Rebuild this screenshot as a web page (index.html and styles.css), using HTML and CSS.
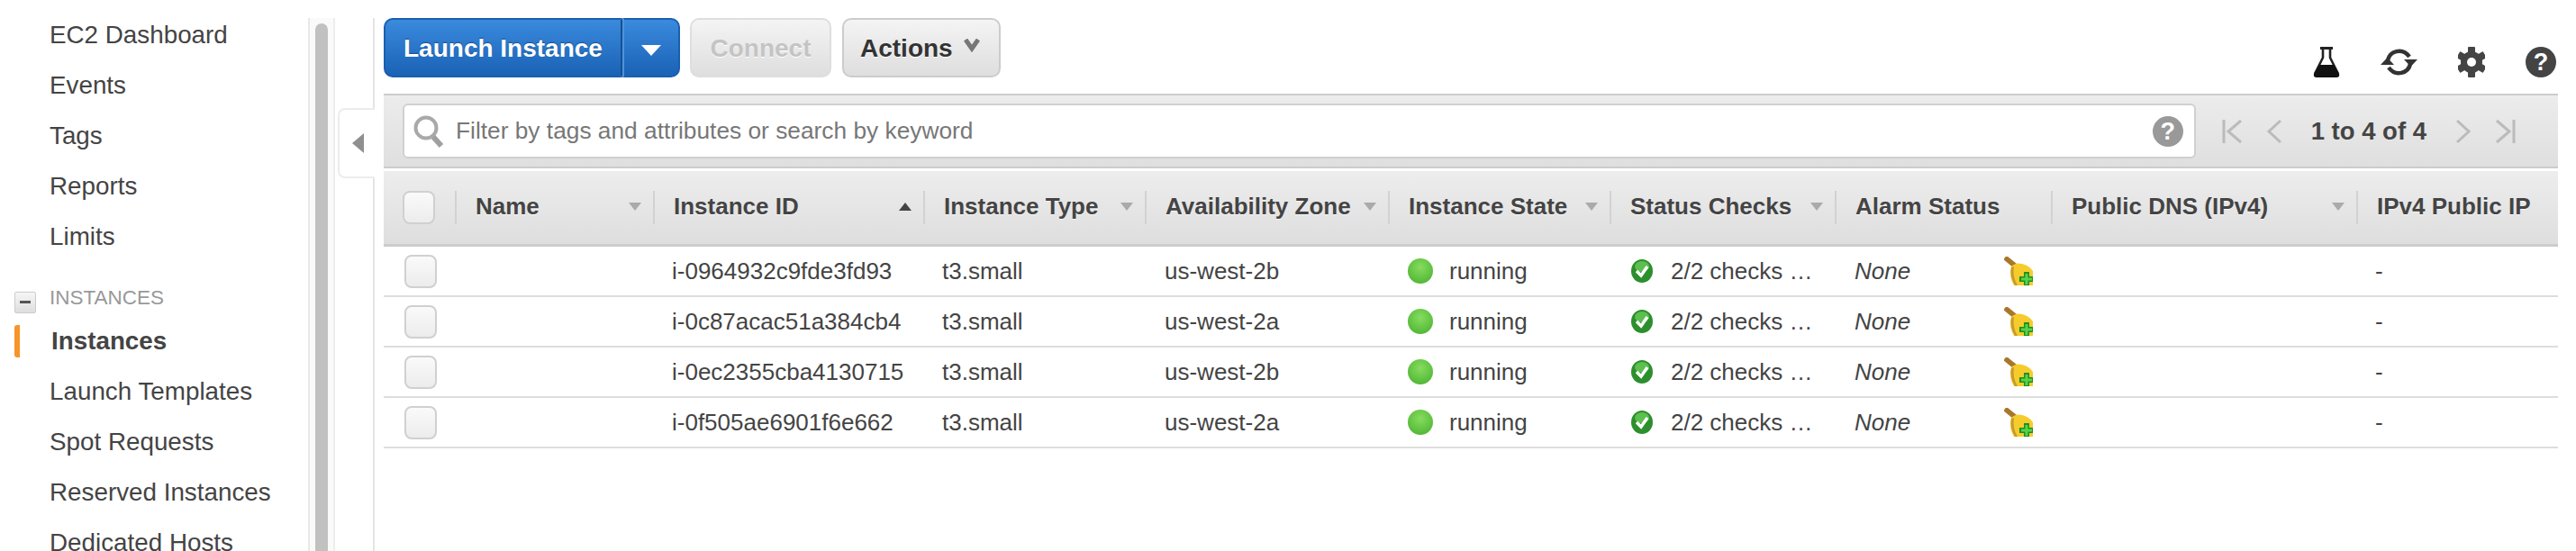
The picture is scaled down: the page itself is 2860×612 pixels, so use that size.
FILE: index.html
```html
<!DOCTYPE html>
<html lang="en">
<head>
  <meta charset="UTF-8">
  <title>EC2 Instances</title>
  <link rel="stylesheet" href="styles.css">
</head>
<body>
  <aside class="sidebar">
    <ul class="nav">
      <li>EC2 Dashboard</li>
      <li>Events</li>
      <li>Tags</li>
      <li>Reports</li>
      <li>Limits</li>
      <li class="nav-group"><span class="minus-box"><span></span></span>INSTANCES</li>
      <li class="active">Instances</li>
      <li>Launch Templates</li>
      <li>Spot Requests</li>
      <li>Reserved Instances</li>
      <li>Dedicated Hosts</li>
    </ul>
  </aside>
  <div class="scrollbar"><div class="thumb"></div></div>
  <div class="rail">
    <div class="rail-top"></div>
    <div class="collapse-tab"><span class="arrow-left"></span></div>
    <div class="rail-bottom"></div>
  </div>

  <main class="main">
    <div class="toolbar">
      <div class="split-btn">
        <button class="btn-blue btn-label">Launch Instance</button>
        <button class="btn-blue btn-caret"><span class="caret-white"></span></button>
      </div>
      <button class="btn btn-disabled">Connect</button>
      <button class="btn btn-actions">Actions
        <svg class="chevron" width="18" height="15" viewBox="0 0 18 15"><path d="M2 1l7 10 7-10" fill="none" stroke="#777" stroke-width="5"/></svg>
      </button>
      <div class="top-icons">
        <svg width="30" height="34" viewBox="0 0 30 34">
          <path d="M8 0h14v3H8z" fill="#222"/>
          <path d="M11 2v10L2 30M19 2v10l9 18" fill="none" stroke="#222" stroke-width="2.6"/>
          <path d="M7 20h16l6 10q1 4-3 4H4q-4 0-3-4z" fill="#111"/>
        </svg>
        <svg width="41" height="34" viewBox="0 0 41 34">
          <path d="M8 15C10 5 24 0 32 11" fill="none" stroke="#333" stroke-width="4.500"/>
          <path d="M26 14h15l-7.500 8z" fill="#333"/>
          <path d="M33 19C31 29 17 34 9 23" fill="none" stroke="#333" stroke-width="4.500"/>
          <path d="M0 20h15l-7.500-8z" fill="#333"/>
        </svg>
        <svg width="30" height="34" viewBox="0 0 30 34">
          <g fill="#444">
            <rect x="11" y="0" width="8" height="34" rx="1"/>
            <rect x="11" y="0" width="8" height="34" rx="1" transform="rotate(60 15 17)"/>
            <rect x="11" y="0" width="8" height="34" rx="1" transform="rotate(120 15 17)"/>
            <circle cx="15" cy="17" r="12"/>
          </g>
          <circle cx="15" cy="17" r="5" fill="#fff"/>
        </svg>
        <span class="help-icon">?</span>
      </div>
    </div>

    <div class="filter-band">
      <div class="search-box">
        <svg width="36" height="38" viewBox="0 0 36 38">
          <circle cx="15" cy="15" r="11.500" fill="none" stroke="#a9a9a9" stroke-width="4"/>
          <path d="M23 25l9 10" stroke="#a0a0a0" stroke-width="6"/>
        </svg>
        <span class="search-text">Filter by tags and attributes or search by keyword</span>
        <span class="help-icon help-grey">?</span>
      </div>
      <div class="pager">
        <svg width="22" height="28" viewBox="0 0 22 28"><path d="M2 1v26M21 2L7 14l14 12" fill="none" stroke="#bbb" stroke-width="3"/></svg>
        <svg width="16" height="28" viewBox="0 0 16 28"><path d="M15 2L2 14l13 12" fill="none" stroke="#bbb" stroke-width="3"/></svg>
        <span class="pager-text">1 to 4 of 4</span>
        <svg width="16" height="28" viewBox="0 0 16 28"><path d="M1 2l13 12L1 26" fill="none" stroke="#bbb" stroke-width="3"/></svg>
        <svg width="22" height="28" viewBox="0 0 22 28"><path d="M20 1v26M1 2l14 12L1 26" fill="none" stroke="#bbb" stroke-width="3"/></svg>
      </div>
    </div>

    <table class="grid">
      <colgroup>
        <col class="c-check"><col class="c-name"><col class="c-id"><col class="c-type"><col class="c-zone">
        <col class="c-state"><col class="c-status"><col class="c-alarm"><col class="c-dns"><col class="c-ip">
      </colgroup>
      <thead>
        <tr>
          <th class="th-check"><span class="checkbox"></span></th>
          <th><div class="th-in">Name<span class="sort"></span></div></th>
          <th><div class="th-in">Instance ID<span class="sort sort-up"></span></div></th>
          <th><div class="th-in">Instance Type<span class="sort"></span></div></th>
          <th><div class="th-in">Availability Zone<span class="sort"></span></div></th>
          <th><div class="th-in">Instance State<span class="sort"></span></div></th>
          <th><div class="th-in">Status Checks<span class="sort"></span></div></th>
          <th><div class="th-in">Alarm Status</div></th>
          <th><div class="th-in">Public DNS (IPv4)<span class="sort"></span></div></th>
          <th><div class="th-in">IPv4 Public IP</div></th>
        </tr>
      </thead>
      <tbody id="rows"></tbody>
    </table>
  </main>

  <template id="rowTpl">
    <tr>
      <td class="td-check"><span class="checkbox"></span></td>
      <td></td>
      <td class="id"></td>
      <td>t3.small</td>
      <td class="zone"></td>
      <td class="state"><div class="cell-flex"><span class="dot"></span>running</div></td>
      <td class="checks"><div class="cell-flex status">
        <svg width="24" height="26" viewBox="0 0 24 26">
          <ellipse cx="12" cy="13" rx="12" ry="13" fill="#2c8f2c"/>
          <ellipse cx="12" cy="8" rx="8" ry="6" fill="#5cbf4f"/>
          <path d="M6 13l5 5 7-10" fill="none" stroke="#fff" stroke-width="3.500"/>
        </svg>2/2 checks …</div></td>
      <td class="alarm-cell"><div class="cell-flex alarm"><em>None</em>
        <svg class="broom" width="32" height="32" viewBox="0 0 32 32">
          <path d="M1 1l11 9" stroke="#a9772a" stroke-width="5.500"/>
          <path d="M8 11q5-5 12-3 8 2 12 8v16H11Q5 22 8 11z" fill="#f6cc2c"/>
          <path d="M8 12q-2 9 4 20h3Q9 22 11 11z" fill="#c99a2e"/>
          <path d="M28 17h-6v5h-5v6h5v4h6v-4h4v-6h-4z" fill="#1f8f1f"/>
          <path d="M26.500 19h-3v4.500H19v3h4.500V31h3v-4.500H31v-3h-4.500z" fill="#58d24a"/>
        </svg></div></td>
      <td></td>
      <td class="ip">-</td>
    </tr>
  </template>

  <script>
    const instances = [
      ['i-0964932c9fde3fd93', 'us-west-2b'],
      ['i-0c87acac51a384cb4', 'us-west-2a'],
      ['i-0ec2355cba4130715', 'us-west-2b'],
      ['i-0f505ae6901f6e662', 'us-west-2a']
    ];
    const rows = document.getElementById('rows');
    const tpl = document.getElementById('rowTpl');
    instances.forEach(([id, zone]) => {
      const row = tpl.content.cloneNode(true);
      row.querySelector('.id').textContent = id;
      row.querySelector('.zone').textContent = zone;
      rows.appendChild(row);
    });
  </script>
</body>
</html>
```

FILE: styles.css
```css
html, body {
  margin: 0;
  padding: 0;
  height: 612px;
  overflow: hidden;
  background: #fff;
}
body {
  display: flex;
  font-family: "Liberation Sans", Arial, sans-serif;
  color: #444;
}

/* left nav */
.sidebar {
  width: 342px;
  flex: none;
  padding-top: 11px;
  box-sizing: border-box;
}
.nav {
  list-style: none;
  margin: 0;
  padding: 0;
  font-size: 27.8px;
}
.nav li {
  height: 56px;
  line-height: 56px;
  padding-left: 55px;
  white-space: nowrap;
}
.nav .nav-group {
  display: flex;
  align-items: center;
  height: 42px;
  line-height: 42px;
  margin-top: 18px;
  padding: 1px 0 0 16px;
  box-sizing: border-box;
  font-size: 22.5px;
  color: #999;
}
.minus-box {
  display: flex;
  align-items: center;
  justify-content: center;
  width: 24px;
  height: 24px;
  margin: 10px 15px 0 0;
  box-sizing: border-box;
  background: linear-gradient(#f6f6f6, #dedede);
  border: 1px solid #ccc;
  border-radius: 2px;
}
.minus-box span {
  width: 12px;
  height: 3px;
  background: #555;
}
.nav .active {
  display: flex;
  align-items: center;
  padding-left: 16px;
  font-weight: bold;
}
.nav .active::before {
  content: "";
  width: 6px;
  height: 36px;
  margin-right: 35px;
  background: #f7942a;
  border-radius: 3px 0 0 3px;
}

.scrollbar {
  width: 30px;
  flex: none;
  margin-top: 20px;
  padding: 6px 8px 0;
  box-sizing: border-box;
  background: #fafafa;
  border-left: 2px solid #e8e8e8;
  border-right: 2px solid #ededed;
}
.thumb {
  height: 100%;
  margin: 0 -2px;
  background: #c1c1c1;
  border-radius: 8px 8px 0 0;
}

/* collapse rail */
.rail {
  width: 44px;
  flex: none;
  display: flex;
  flex-direction: column;
  padding-top: 20px;
  box-sizing: border-box;
}
.rail-top {
  height: 100px;
  border-right: 2px solid #e4e4e4;
}
.rail-bottom {
  flex: 1;
  border-right: 2px solid #e4e4e4;
}
.collapse-tab {
  height: 78px;
  margin-left: 3px;
  display: flex;
  align-items: center;
  padding-left: 14px;
  box-sizing: border-box;
  border: 2px solid #ececec;
  border-right: none;
  border-radius: 8px 0 0 8px;
}
.arrow-left {
  border-style: solid;
  border-width: 11px 13px 11px 0;
  border-color: transparent #8f8f8f transparent transparent;
}

.main {
  width: 2414px;
  flex: none;
  margin-left: 10px;
}

/* buttons */
.toolbar {
  display: flex;
  align-items: flex-start;
  height: 104px;
  padding-top: 20px;
  box-sizing: border-box;
}
.split-btn {
  display: flex;
  margin-right: 11px;
}
button {
  font-family: inherit;
  font-size: 28px;
  font-weight: bold;
  height: 66px;
  padding: 2px 0 0;
  box-sizing: border-box;
}
.btn-blue {
  color: #fff;
  background: linear-gradient(#3a8ade, #1a62b5);
  border: 2px solid #1a5fae;
  text-shadow: 0 -1px 1px #174f91;
}
.btn-label {
  width: 265px;
  padding-left: 20px;
  text-align: left;
  border-right: 2px solid #15518f;
  border-radius: 10px 0 0 10px;
}
.btn-caret {
  width: 64px;
  border-left: 2px solid #4e93dd;
  border-radius: 0 10px 10px 0;
}
.caret-white {
  display: inline-block;
  border-style: solid;
  border-width: 12px 11px 0;
  border-color: #fff transparent transparent;
  vertical-align: middle;
}
.btn {
  background: linear-gradient(#f4f4f4, #dedede);
  border: 2px solid #ccc;
  border-radius: 10px;
  margin-right: 12px;
}
.btn-disabled {
  width: 157px;
  color: #c4c4c4;
  border-color: #dedede;
  text-shadow: 0 1px 0 #fff;
}
.btn-actions {
  width: 176px;
  color: #333;
  padding-left: 18px;
  text-align: left;
  text-shadow: 0 1px 0 #fff;
}
.chevron {
  margin-left: 5px;
  vertical-align: 5px;
}
.top-icons {
  margin-left: auto;
  padding: 32px 2px 0 0;
  display: flex;
  gap: 45px;
}
.help-icon {
  width: 34px;
  height: 34px;
  border-radius: 50%;
  background: #444;
  color: #fff;
  font-size: 27px;
  font-weight: bold;
  line-height: 34px;
  text-align: center;
}
.help-grey {
  background: #999;
  margin-left: auto;
}

/* filter band */
.filter-band {
  display: flex;
  align-items: center;
  height: 83px;
  padding: 0 47px 0 21px;
  box-sizing: border-box;
  background: linear-gradient(#ececec, #dfdfdf);
  border-top: 2px solid #ccc;
  border-bottom: 2px solid #ccc;
  margin-bottom: 3px;
}
.search-box {
  flex: 1;
  height: 61px;
  display: flex;
  align-items: center;
  padding: 0 12px 0 9px;
  box-sizing: border-box;
  background: #fff;
  border: 2px solid #d0d0d0;
  border-radius: 6px;
}
.search-text {
  margin-left: 12px;
  font-size: 26.3px;
  color: #777;
}
.pager {
  display: flex;
  align-items: center;
  gap: 28px;
  margin-left: 29px;
}
.pager-text {
  margin: 0 5px;
  font-size: 27.5px;
  font-weight: bold;
  color: #444;
}

/* table */
.grid {
  width: 2414px;
  table-layout: fixed;
  border-collapse: separate;
  border-spacing: 0;
  font-size: 26px;
}
.c-check { width: 79px; }
.c-name { width: 220px; }
.c-id { width: 300px; }
.c-type { width: 246px; }
.c-zone { width: 270px; }
.c-state { width: 246px; }
.c-status { width: 250px; }
.c-alarm { width: 240px; }
.c-dns { width: 339px; }
.c-ip { width: 224px; }
.grid th {
  height: 84px;
  padding: 22px 0 0;
  box-sizing: border-box;
  vertical-align: top;
  text-align: left;
  background: linear-gradient(#ededed, #dedede);
  border-bottom: 3px solid #ccc;
  white-space: nowrap;
  overflow: hidden;
}
.th-in {
  display: flex;
  align-items: center;
  height: 37px;
  padding: 0 13px 2px 21px;
  box-sizing: border-box;
  border-left: 2px solid #d2d2d2;
  text-shadow: 0 1px 0 #f6f6f6;
}
.grid .th-check {
  padding-left: 21px;
}
.sort {
  margin-left: auto;
  border-style: solid;
  border-width: 9px 7px 0;
  border-color: #aaa transparent transparent;
}
.sort-up {
  border-width: 0 7px 9px;
  border-color: transparent transparent #444;
}
.checkbox {
  display: block;
  width: 36px;
  height: 37px;
  box-sizing: border-box;
  background: linear-gradient(#fafafa, #ececec);
  border: 2px solid #d0d0d0;
  border-radius: 8px;
}
.grid td {
  height: 56px;
  padding: 0 0 0 21px;
  box-sizing: border-box;
  border-bottom: 2px solid #ddd;
  white-space: nowrap;
  overflow: hidden;
}
.grid .td-check {
  padding-left: 23px;
}
.grid .zone,
.grid .state,
.grid .alarm-cell {
  padding-left: 22px;
}
.grid .checks {
  padding-left: 24px;
}
.cell-flex {
  display: flex;
  align-items: center;
}
.dot {
  width: 28px;
  height: 28px;
  margin-right: 18px;
  border-radius: 50%;
  background: radial-gradient(circle at 50% 35%, #86dc5e, #45ae2d);
}
.status svg {
  margin-right: 20px;
}
.alarm em {
  font-style: italic;
}
.broom {
  margin-left: auto;
  margin-right: 20px;
}
.grid .ip {
  padding-left: 21px;
}
```
